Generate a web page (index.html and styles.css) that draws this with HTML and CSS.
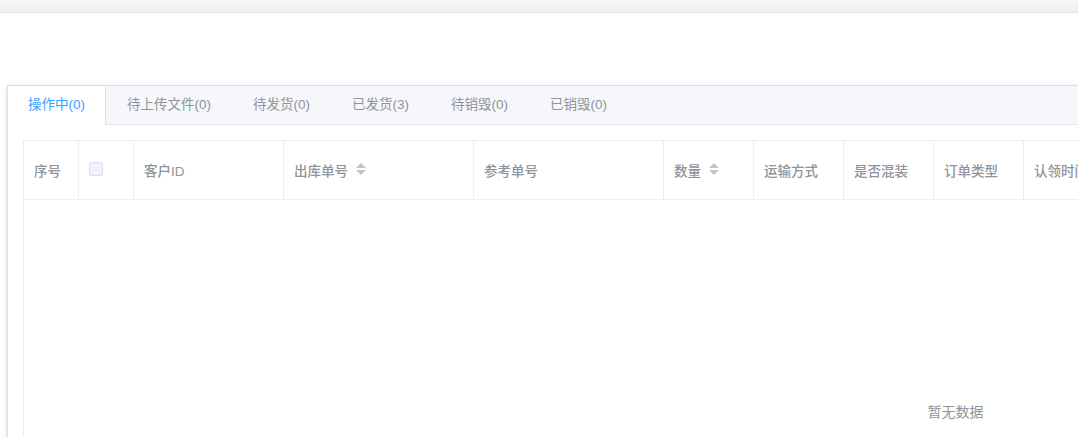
FILE: index.html
```html
<!DOCTYPE html>
<html lang="zh-CN">
<head>
<meta charset="utf-8">
<title>订单</title>
<link rel="stylesheet" href="styles.css">
</head>
<body>
<div class="topbar"></div>
<div class="main">
  <div class="card">
    <div class="tabs-header">
      <div class="tab active">操作中(0)</div>
      <div class="tab">待上传文件(0)</div>
      <div class="tab">待发货(0)</div>
      <div class="tab">已发货(3)</div>
      <div class="tab">待销毁(0)</div>
      <div class="tab">已销毁(0)</div>
    </div>
    <div class="content">
      <div class="table">
        <div class="thead">
          <div class="th w55">序号</div>
          <div class="th w55"><span class="checkbox"></span></div>
          <div class="th w150">客户ID</div>
          <div class="th w190">出库单号<span class="sort"><i class="up"></i><i class="down"></i></span></div>
          <div class="th w190">参考单号</div>
          <div class="th w90">数量<span class="sort"><i class="up"></i><i class="down"></i></span></div>
          <div class="th w90">运输方式</div>
          <div class="th w90">是否混装</div>
          <div class="th w90">订单类型</div>
          <div class="th w160">认领时间</div>
          <div class="th w160">创建时间</div>
          <div class="th w160">操作</div>
          <div class="th wfill"></div>
        </div>
        <div class="empty">暂无数据</div>
      </div>
    </div>
  </div>
</div>
</body>
</html>
```

FILE: styles.css
```css
* { box-sizing: border-box; }
html, body {
  margin: 0;
  padding: 0;
  background: #fff;
  overflow: hidden;
  width: 1078px;
  height: 437px;
}
body {
  font-family: "Liberation Sans", "Noto Sans CJK SC", sans-serif;
  font-size: 13.5px;
}
.topbar {
  height: 13px;
  background: linear-gradient(#f6f6f6, #efefef);
  border-bottom: 1px solid #e3e3e8;
}
.main {
  padding: 72px 0 0 7px;
}
.card {
  width: 1880px;
  height: 400px;
  background: #fff;
  border: 1px solid #dcdfe6;
  box-shadow: 0 2px 4px rgba(0, 0, 0, 0.12), 0 0 6px rgba(0, 0, 0, 0.04);
}
.tabs-header {
  display: flex;
  height: 39px;
  background: #f5f7fa;
  border-bottom: 1px solid #e4e7ed;
}
.tab {
  padding: 0 20px;
  height: 38px;
  line-height: 38px;
  color: #909399;
  border-right: 1px solid transparent;
  margin-right: 1px;
  white-space: nowrap;
}
.tab.active {
  color: #409eff;
  background: #fff;
  border-right-color: #dcdfe6;
  height: 39px;
}
.content {
  padding: 15px;
}
.table {
  width: 1864px;
  border-left: 1px solid #ebeef5;
  border-top: 1px solid #ebeef5;
}
.thead {
  display: flex;
  height: 59px;
  border-bottom: 1px solid #ebeef5;
}
.th {
  display: flex;
  align-items: center;
  padding-left: 10px;
  padding-bottom: 1px;
  color: #909399;
  font-weight: 500;
  border-right: 1px solid #ebeef5;
  white-space: nowrap;
  flex: none;
}
.w55 { width: 55px; }
.w90 { width: 90px; }
.w150 { width: 150px; }
.w160 { width: 160px; }
.w190 { width: 190px; }
.wfill { flex: 1; border-right: none; }
.checkbox {
  display: inline-block;
  width: 14px;
  height: 14px;
  border: 1px solid #dcdfe6;
  border-radius: 2px;
  background: #edf2fc;
  margin-top: -1px;
}
.sort {
  display: inline-flex;
  flex-direction: column;
  justify-content: center;
  gap: 2px;
  margin-left: 8px;
  margin-top: -2px;
}
.sort i {
  display: block;
  width: 0;
  height: 0;
  border-left: 5px solid transparent;
  border-right: 5px solid transparent;
}
.sort .up { border-bottom: 5px solid #c0c4cc; }
.sort .down { border-top: 5px solid #c0c4cc; }
.empty {
  height: 424px;
  line-height: 424px;
  text-align: center;
  color: #909399;
  font-size: 14px;
}
```
